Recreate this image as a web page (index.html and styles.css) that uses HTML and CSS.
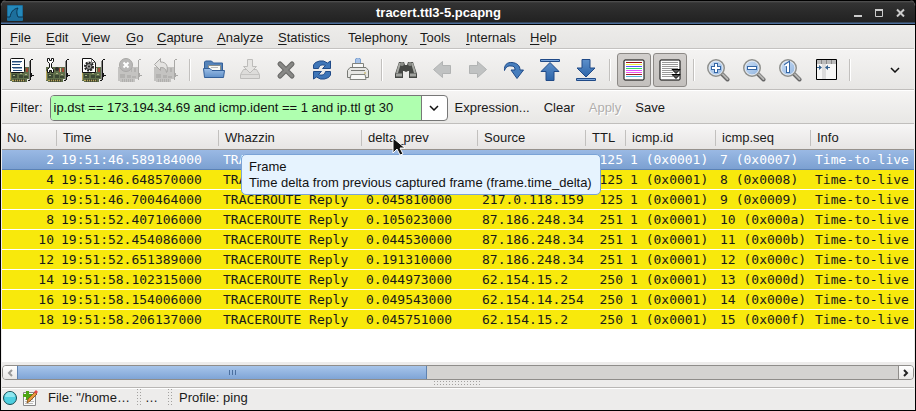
FILE: index.html
```html
<!DOCTYPE html>
<html lang="en">
<head>
<meta charset="utf-8">
<title>tracert.ttl3-5.pcapng</title>
<link rel="stylesheet" href="styles.css">
</head>
<body>
<svg class="defs" aria-hidden="true">
  <defs>
    <linearGradient id="blue" x1="0" y1="0" x2="0" y2="1"><stop offset="0" stop-color="#5d90cb"/><stop offset="1" stop-color="#2c64a8"/></linearGradient>
    <linearGradient id="folder" x1="0" y1="0" x2="0" y2="1"><stop offset="0" stop-color="#9dbfe6"/><stop offset="1" stop-color="#5f8fc8"/></linearGradient>
    <linearGradient id="lens" x1="0" y1="0" x2="1" y2="1"><stop offset="0" stop-color="#cfe0f4"/><stop offset="1" stop-color="#8fb4e0"/></linearGradient>
    <symbol id="card" viewBox="0 0 24 24">
      <g shape-rendering="crispEdges">
        <path d="M0 9h20v12h-3v3H2v-1H0z" fill="#5f6e4a"/>
        <path d="M0 13h1v9H0zM2 22h13v1H2z" fill="#b9a65a"/>
        <path d="M4 21h1v3H4zM6 21h1v3H6zM8 21h1v3H8zM10 21h1v3h-1zM12 21h1v3h-1zM14 21h1v3h-1z" fill="#4a4830"/>
        <path d="M2 16h5v4H2zM9 17h4v3H9zM14 18h4v2h-4z" fill="#3b4733"/>
        <path d="M3 17h2v1H3zM10 15h2v1h-2zM15 16h2v1h-2z" fill="#a6b184"/>
        <path d="M13 10h1v4h-1zM16 10h2v4h-2z" fill="#a04a35"/>
        <path d="M14 10h1v4h-1z" fill="#d7c9a4"/>
        <path d="M19 3h1v19h-1z" fill="#8a8a86"/>
        <path d="M20 2h1v20h-1zM21 1h2v1h-2zM21 15h1v4h-1zM22 17h2v1h-2zM18 22h2v1h-2z" fill="#161616"/>
      </g>
    </symbol>
    <symbol id="graycard" viewBox="0 0 24 24">
      <g shape-rendering="crispEdges">
        <path d="M0 9h20v12h-3v3H2v-1H0z" fill="#c4c3c1"/>
        <path d="M4 21h1v3H4zM6 21h1v3H6zM8 21h1v3H8zM10 21h1v3h-1zM12 21h1v3h-1zM14 21h1v3h-1z" fill="#b0afad"/>
        <path d="M2 16h5v4H2zM9 17h4v3H9zM14 18h4v2h-4zM13 10h1v4h-1zM16 10h2v4h-2z" fill="#b3b2b0"/>
        <path d="M20 2h1v20h-1zM21 1h2v1h-2zM21 15h1v4h-1zM22 17h2v1h-2z" fill="#a9a8a6"/>
      </g>
    </symbol>
    <symbol id="glass" viewBox="0 0 24 24">
      <path d="M16 16l5.500 5.500" stroke="#666" stroke-width="4" stroke-linecap="round"/>
      <path d="M16.500 16l5 5" stroke="#b5b5b3" stroke-width="2" stroke-linecap="round"/>
      <circle cx="10" cy="10" r="8" fill="url(#lens)" stroke="#8f908d" stroke-width="2"/>
      <circle cx="10" cy="10" r="7" fill="none" stroke="#eef3fa"/>
    </symbol>
  </defs>
</svg>
<div class="window">
  <header class="titlebar">
    <svg class="app-icon" viewBox="0 0 16 16" aria-hidden="true"><rect width="16" height="16" rx="1" fill="#1b6c99"/><path d="M1 1h14v14H1z" fill="#2489bb"/><path d="M0 12h3c1-5 3-8 8-9-2 3-1 7 0 9h5v3H0z" fill="#1d6f9c"/><path d="M0 12h3c1-5 3-8 8-9-2 3-1 7 0 9h5" fill="none" stroke="#0b3552" stroke-width="1"/></svg>
    <h1>tracert.ttl3-5.pcapng</h1>
    <div class="window-buttons">
      <button aria-label="Minimize"><svg viewBox="0 0 9 9"><path d="M0 8h8" stroke="#ccc" stroke-width="2"/></svg></button>
      <button aria-label="Maximize"><svg viewBox="0 0 9 9"><path d="M.5 1v7.500h7V1" fill="none" stroke="#ccc"/><path d="M0 2h8" stroke="#ccc" stroke-width="2"/></svg></button>
      <button aria-label="Close"><svg viewBox="0 0 9 9"><path d="M1 1.500l7 7M8 1.500l-7 7" stroke="#ccc" stroke-width="2"/></svg></button>
    </div>
  </header>
  <nav class="menubar">
    <button><u>F</u>ile</button><button><u>E</u>dit</button><button><u>V</u>iew</button><button><u>G</u>o</button><button><u>C</u>apture</button><button><u>A</u>nalyze</button><button><u>S</u>tatistics</button><button>Telephon<u>y</u></button><button><u>T</u>ools</button><button><u>I</u>nternals</button><button><u>H</u>elp</button>
  </nav>
  <div class="toolbar">
    <button class="tool" aria-label="List interfaces"><svg viewBox="0 0 24 24"><use href="#card"/><rect x=".5" y=".5" width="14" height="14" rx="1" fill="#fff" stroke="#111"/><path d="M2 3.500h10M2 6.500h8M2 9.500h10M3 12.500h9" stroke="#234a78"/><path d="M2 4.500h9M3 10.500h9" stroke="#8fa9c8"/></svg></button>
    <button class="tool" aria-label="Capture options"><svg viewBox="0 0 24 24"><use href="#card"/><path d="M1.500.500v3l2 2v4l-2 2v3h2v-2h2v2h2v-3l-2-2v-4l2-2v-3h-2v2h-2v-2z" fill="#fff" stroke="#111"/><circle cx="11" cy="11" r="2" fill="#333"/></svg></button>
    <button class="tool" aria-label="Start capture"><svg viewBox="0 0 24 24"><use href="#card"/><path d="M.5.500h9l4 4v10H.5z" fill="#fff" stroke="#111"/><path d="M9.500.500v4h4" fill="none" stroke="#777"/><circle cx="7" cy="8.500" r="4" fill="none" stroke="#222" stroke-width="2" stroke-dasharray="2 1"/><circle cx="7" cy="8.500" r="3" fill="#999" stroke="#222"/><circle cx="7" cy="8.500" r="1" fill="#222"/></svg></button>
    <button class="tool" aria-label="Stop capture" disabled><svg viewBox="0 0 24 24"><use href="#graycard"/><circle cx="8" cy="7" r="6.500" fill="#b9b8b7" stroke="#a8a7a5"/><path d="M5.500 4.500l5 5M10.500 4.500l-5 5" stroke="#fff" stroke-width="2"/></svg></button>
    <button class="tool" aria-label="Restart capture" disabled><svg viewBox="0 0 24 24"><use href="#graycard"/><path d="M.5 6.500l6-6v3.500c6 0 8 4 6 10.500-1-4-2-5-6-5v3z" fill="#e4e3e1" stroke="#a8a7a5"/></svg></button>
    <span class="separator"></span>
    <button class="tool" aria-label="Open"><svg viewBox="0 0 24 24"><path d="M2.500 12V4l1-1h6l2 2h9v8z" fill="#5583b8" stroke="#335f98"/><path d="M6.500 7.500h12v6h-12z" fill="#fafaf5" stroke="#8b8e88"/><path d="M9 9.500h7" stroke="#bbb"/><path d="M1.500 10.500H8l2 2h12.500l-1 7h-19z" fill="url(#folder)" stroke="#335f98"/></svg></button>
    <button class="tool" aria-label="Save" disabled><svg viewBox="0 0 24 24"><path d="M5.500 11.500h13l3 5v4h-19v-4z" fill="#dddcda" stroke="#bdbcba"/><path d="M3 16.500h18" stroke="#c4c3c1"/><path d="M9.500 1.500h5v7h4L12 15 5.500 8.500h4z" fill="#e5e4e2" stroke="#bdbcba"/></svg></button>
    <button class="tool" aria-label="Close file"><svg viewBox="0 0 24 24"><path d="M6 6l12 12M18 6L6 18" stroke="#676765" stroke-width="5" stroke-linecap="round"/><path d="M6 6l12 12M18 6L6 18" stroke="#888886" stroke-width="3" stroke-linecap="round"/></svg></button>
    <button class="tool" aria-label="Reload"><svg viewBox="0 0 24 24"><g fill="#3f76b8" stroke="#204a87" stroke-linejoin="round"><path d="M3.500 10.500V7l2-2.500 4-1.500h4l4 2 3-2v7.500h-8l3-3c-3-1-6-1-7 3z"/><path d="M20.500 13.500V17l-2 2.500-4 1.500h-4l-4-2-3 2v-7.500h8l-3 3c3 1 6 1 7-3z"/></g></svg></button>
    <button class="tool" aria-label="Print"><svg viewBox="0 0 24 24"><path d="M9.500 6V1l2-1h1l2 1v5z" fill="#a7c2e7" stroke="#7ba0d0"/><path d="M6.500 5.500h11v6h-11z" fill="#f8f8f6" stroke="#80827d"/><path d="M4 9.500h16l2.500 3v7h-21v-7z" fill="#e6e6e3" stroke="#777974"/><path d="M5 12.500h14" stroke="#777974"/><path d="M5 16.500h14l1 5H4z" fill="#f7f7f5" stroke="#80827d"/><path d="M18 15h2" stroke="#b9a646"/></svg></button>
    <span class="separator"></span>
    <button class="tool" aria-label="Find packet"><svg viewBox="0 0 24 24"><path d="M5 4h5l1 3h2l1-3h5l4 12v4h-8v-7h-1l-2 1-2-1H9v7H1v-4z" fill="#464845"/><path d="M6 5L3 15M18 5l3 10" stroke="#a7a9a4" stroke-width="2"/><path d="M2 17h6M16 17h6" stroke="#a1a39f" stroke-width="3"/><circle cx="8" cy="6" r="2" fill="#8b8d88"/><circle cx="16" cy="6" r="2" fill="#8b8d88"/></svg></button>
    <button class="tool" aria-label="Back" disabled><svg viewBox="0 0 24 24"><path d="M3.500 11.500l9-8v4h8v8h-8v4z" fill="#c0c2c2" stroke="#b1b3b3"/></svg></button>
    <button class="tool" aria-label="Forward" disabled><svg viewBox="0 0 24 24"><path d="M20.500 11.500l-9-8v4h-8v8h8v4z" fill="#c0c2c2" stroke="#b1b3b3"/></svg></button>
    <button class="tool" aria-label="Go to packet"><svg viewBox="0 0 24 24"><path d="M2.500 12.500C2 7 5 4 10 4.500c5 .500 8 3 8 7.500h3.500L15 20.500 9 12h4c0-3-1-4-4-4-3-.500-5 1-6.500 4.500z" fill="#477ebd" stroke="#204a87"/></svg></button>
    <button class="tool" aria-label="First packet"><svg viewBox="0 0 24 24"><path d="M2.500 1.500h19v2h-19z" fill="#7ba6db" stroke="#204a87"/><path d="M12 4.500l9 9h-5v9H8v-9H3z" fill="url(#blue)" stroke="#204a87"/></svg></button>
    <button class="tool" aria-label="Last packet"><svg viewBox="0 0 24 24"><path d="M2.500 20.500h19v2h-19z" fill="#7ba6db" stroke="#204a87"/><path d="M12 19l9-9h-5V1.500H8V10H3z" fill="url(#blue)" stroke="#204a87"/></svg></button>
    <span class="separator"></span>
    <button class="tool pressed" aria-label="Colorize" aria-pressed="true"><svg viewBox="0 0 24 24"><rect x="2" y="2" width="20" height="20" rx="1" fill="#fff" stroke="#000"/><g stroke-width="1"><path d="M4 4.500h16" stroke="#911"/><path d="M4 6.500h16" stroke="#ee4"/><path d="M4 8.500h16" stroke="#55f"/><path d="M4 10.500h16" stroke="#3d6"/><path d="M4 12.500h16" stroke="#d5f"/><path d="M4 14.500h16" stroke="#e5e"/><path d="M4 16.500h16" stroke="#922"/><path d="M4 18.500h16" stroke="#5bd"/></g></svg></button>
    <button class="tool pressed" aria-label="Auto scroll" aria-pressed="true"><svg viewBox="0 0 24 24"><rect x="2" y="2" width="20" height="20" rx="1" fill="#fff" stroke="#000"/><path d="M4 4.500h16M4 6.500h16M4 8.500h16M4 10.500h16M4 12.500h10M4 14.500h11M4 16.500h10M4 18.500h11" stroke="#999"/><path d="M14 11.500h8l-4 4zM14 16.500h8l-4 4z" fill="#555" stroke="#000"/></svg></button>
    <span class="separator"></span>
    <button class="tool" aria-label="Zoom in"><svg viewBox="0 0 24 24"><use href="#glass"/><path d="M10 5v10M5 10h10" stroke="#3566a4" stroke-width="4"/><path d="M10 6v8M6 10h8" stroke="#fff" stroke-width="2"/></svg></button>
    <button class="tool" aria-label="Zoom out"><svg viewBox="0 0 24 24"><use href="#glass"/><path d="M5 10h10" stroke="#3566a4" stroke-width="4"/><path d="M6 10h8" stroke="#fff" stroke-width="2"/></svg></button>
    <button class="tool" aria-label="Normal size"><svg viewBox="0 0 24 24"><use href="#glass"/><path d="M7 8l3-2v9" fill="none" stroke="#3566a4" stroke-width="4"/><path d="M7 8l3-2v8" fill="none" stroke="#fff" stroke-width="2"/></svg></button>
    <button class="tool" aria-label="Resize columns"><svg viewBox="0 0 24 24"><path d="M2.500 1.500h20v20h-20z" fill="#f7f7f6" stroke="#000"/><path d="M3 2h19v4H3z" fill="#bbb"/><path d="M8 6h4v15H8z" fill="#ddd"/><path d="M7.500 2v4M12.500 2v4M17.500 2v4" stroke="#888"/><path d="M3 9.500h4M12 9.500h4" stroke="#35618e"/><path d="M5 7l3 2.500L5 12zM14 7l-3 2.500 3 2.500z" fill="#35618e"/></svg></button>
    <span class="separator"></span>
    <button class="overflow" aria-label="More tools"><svg viewBox="0 0 10 6"><path d="M1 1l4 4 4-4" fill="none" stroke="#111" stroke-width="1.500"/></svg></button>
  </div>
  <form class="filterbar">
    <label for="filter">Filter:</label>
    <div class="combo">
      <input id="filter" type="text" value="ip.dst == 173.194.34.69 and icmp.ident == 1 and ip.ttl gt 30">
      <button type="button" aria-label="Recent filters"><svg viewBox="0 0 10 6"><path d="M1 1l4 4 4-4" fill="none" stroke="#111" stroke-width="1.500"/></svg></button>
    </div>
    <button type="button">Expression...</button>
    <button type="button">Clear</button>
    <button type="button" disabled>Apply</button>
    <button type="button">Save</button>
  </form>
  <main class="packets">
    <table>
      <colgroup><col class="c-no"><col class="c-time"><col class="c-what"><col class="c-delta"><col class="c-source"><col class="c-ttl"><col class="c-id"><col class="c-seq"><col></colgroup>
      <thead><tr><th>No.</th><th>Time</th><th>Whazzin</th><th>delta_prev</th><th>Source</th><th>TTL</th><th>icmp.id</th><th>icmp.seq</th><th>Info</th></tr></thead>
      <tbody>
        <tr class="selected"><td>2</td><td>19:51:46.589184000</td><td>TRACEROUTE Reply</td><td></td><td></td><td>125</td><td>1 (0x0001)</td><td>7 (0x0007)</td><td>Time-to-live</td></tr>
        <tr><td>4</td><td>19:51:46.648570000</td><td>TRACEROUTE Reply</td><td></td><td></td><td>125</td><td>1 (0x0001)</td><td>8 (0x0008)</td><td>Time-to-live</td></tr>
        <tr><td>6</td><td>19:51:46.700464000</td><td>TRACEROUTE Reply</td><td>0.045810000</td><td>217.0.118.159</td><td>125</td><td>1 (0x0001)</td><td>9 (0x0009)</td><td>Time-to-live</td></tr>
        <tr><td>8</td><td>19:51:52.407106000</td><td>TRACEROUTE Reply</td><td>0.105023000</td><td>87.186.248.34</td><td>251</td><td>1 (0x0001)</td><td>10 (0x000a)</td><td>Time-to-live</td></tr>
        <tr><td>10</td><td>19:51:52.454086000</td><td>TRACEROUTE Reply</td><td>0.044530000</td><td>87.186.248.34</td><td>251</td><td>1 (0x0001)</td><td>11 (0x000b)</td><td>Time-to-live</td></tr>
        <tr><td>12</td><td>19:51:52.651389000</td><td>TRACEROUTE Reply</td><td>0.191310000</td><td>87.186.248.34</td><td>251</td><td>1 (0x0001)</td><td>12 (0x000c)</td><td>Time-to-live</td></tr>
        <tr><td>14</td><td>19:51:58.102315000</td><td>TRACEROUTE Reply</td><td>0.044973000</td><td>62.154.15.2</td><td>250</td><td>1 (0x0001)</td><td>13 (0x000d)</td><td>Time-to-live</td></tr>
        <tr><td>16</td><td>19:51:58.154006000</td><td>TRACEROUTE Reply</td><td>0.049543000</td><td>62.154.14.254</td><td>250</td><td>1 (0x0001)</td><td>14 (0x000e)</td><td>Time-to-live</td></tr>
        <tr><td>18</td><td>19:51:58.206137000</td><td>TRACEROUTE Reply</td><td>0.045751000</td><td>62.154.15.2</td><td>250</td><td>1 (0x0001)</td><td>15 (0x000f)</td><td>Time-to-live</td></tr>
      </tbody>
    </table>
    <div class="tooltip" role="tooltip">Frame<br>Time delta from previous captured frame (frame.time_delta)</div>
    <svg class="cursor" viewBox="0 0 13 20" aria-hidden="true"><path d="M1 1v15l4-4 3 6 3-1-3-6h5z" fill="#111" stroke="#fff"/></svg>
  </main>
  <div class="scrollbar">
    <button aria-label="Scroll left" disabled><svg viewBox="0 0 6 8"><path d="M5 1L2 4l3 3" fill="none" stroke="#999" stroke-width="2"/></svg></button>
    <div class="track"><div class="thumb"><i></i><i></i><i></i></div></div>
    <button aria-label="Scroll right"><svg viewBox="0 0 6 8"><path d="M1 1l3 3-3 3" fill="none" stroke="#222" stroke-width="2"/></svg></button>
  </div>
  <div class="pane-grip"><span></span></div>
  <footer class="statusbar">
    <button aria-label="Expert info"><svg viewBox="0 0 16 16"><circle cx="8" cy="8" r="6.500" fill="#4dcfe0" stroke="#174b52"/><path d="M3 7a5 5 0 0 1 10 0z" fill="#8ee6ee"/></svg></button>
    <button aria-label="Edit capture comment"><svg viewBox="0 0 16 16"><path d="M1.500 2.500h12v13h-12z" fill="#fafafa" stroke="#888"/><path d="M3 9.500h8M3 11.500h9M3 13.500h8" stroke="#bbb"/><path d="M4 1h3v3h3v3H7v3H4V7H1V4h3z" fill="#4ea514"/><path d="M5 13l1-4 7-7 2 2-7 7z" fill="#e99a3e" stroke="#8c5a22"/><path d="M12 2l2-2 2 2-2 2z" fill="#e04848"/></svg></button>
    <span class="file">File: "/home…</span>
    <span class="grip"></span>
    <span class="packets-info">…</span>
    <span class="grip"></span>
    <span class="profile">Profile: ping</span>
  </footer>
</div>
</body>
</html>
```
FILE: styles.css
```css
* { box-sizing: border-box; }

body {
  margin: 0;
  background: #000;
  color: #1a1a1a;
  font: 13px/16px "Liberation Sans", Arial, sans-serif;
}

button {
  padding: 0;
  border: 0;
  background: none;
  color: inherit;
  font: inherit;
}

svg { display: block; }
.defs { position: absolute; width: 0; height: 0; }

.window {
  display: flex;
  flex-direction: column;
  min-height: 100vh;
  padding: 0 1px;
  overflow: hidden;
  background: #edeceb;
  border: solid #000;
  border-width: 0 1px 1px;
  border-radius: 6px 6px 0 0;
}

.titlebar {
  display: flex;
  align-items: center;
  height: 25px;
  margin: 0 -1px;
  padding: 0 10px 0 6px;
  border-top: 1px solid #000;
  border-bottom: 1px solid #000;
  background: linear-gradient(#555 0, #333 2px, #2b2b2b 10px, #222 21px, #4d6f9c 22px);
}
.app-icon { width: 16px; height: 16px; }
.titlebar h1 {
  flex: 1;
  margin: 0;
  color: #fff;
  font-size: 13px;
  font-weight: bold;
  text-align: center;
}
.window-buttons { display: flex; gap: 12px; }
.window-buttons svg { width: 9px; height: 9px; }

.menubar {
  display: grid;
  grid-template-columns: 36px 36px 44px 31px 60px 61px 70px 72px 46px 64px auto;
  justify-content: start;
  justify-items: start;
  height: 24px;
  padding: 2px 0 0 8px;
  border-bottom: 1px solid #c4c2c0;
  background: linear-gradient(#edecea, #e6e5e3);
}
.menubar u { text-underline-offset: 2px; }

.toolbar {
  display: flex;
  align-items: center;
  height: 41px;
  padding: 0 9px 0 2px;
  border-top: 1px solid #fff;
  border-bottom: 1px solid #c0bebc;
  background: linear-gradient(#f4f3f2, #e7e6e4);
}
.tool {
  display: grid;
  place-items: center;
  width: 34px;
  height: 34px;
  margin: 0 1px;
  border: 1px solid transparent;
  border-radius: 3px;
}
.tool svg { width: 24px; height: 24px; }
.tool.pressed {
  border-color: #8c8986;
  background: linear-gradient(#d2cfcd, #c3c0bd);
}
.separator {
  width: 2px;
  height: 22px;
  margin: 0 5px;
  border-left: 1px solid #c2c0be;
  border-right: 1px solid #fff;
}
.overflow { margin-left: auto; padding: 5px; }
.overflow svg, .combo svg { width: 10px; height: 6px; }

.filterbar {
  display: flex;
  align-items: center;
  height: 34px;
  padding: 2px 0 0 8px;
  border-top: 1px solid #fff;
  border-bottom: 1px solid #c0bebc;
  background: linear-gradient(#f5f4f3, #e8e7e5);
}
.filterbar > button { margin-right: 14px; }
.filterbar > button:disabled { color: #b0aeac; text-shadow: 1px 1px #fff; }
.combo {
  display: flex;
  width: 398px;
  height: 26px;
  margin: 0 7px;
  border: 1px solid #777;
  border-radius: 4px;
  background: #fff;
  overflow: hidden;
}
.combo input {
  flex: 1;
  min-width: 0;
  padding: 0 3px;
  border: 0;
  border-right: 1px solid #777;
  background: #afffaf;
  color: #111;
  font: inherit;
  outline: 0;
}
.combo button { display: grid; place-items: center; width: 25px; }

.packets {
  position: relative;
  flex: 1;
  overflow: hidden;
  background: #fff;
}
table {
  width: 100%;
  table-layout: fixed;
  border-collapse: separate;
  border-spacing: 0;
}
.c-no { width: 55px; }
.c-time { width: 162px; }
.c-what { width: 143px; }
.c-delta { width: 116px; }
.c-source { width: 108px; }
.c-ttl { width: 40px; }
.c-id { width: 90px; }
.c-seq { width: 95px; }
thead tr {
  background: linear-gradient(#f7f6f6, #e6e4e3);
}
th {
  height: 26px;
  padding: 3px 0 0 6px;
  border-bottom: 1px solid #96918c;
  background: linear-gradient(#c2c0be, #c2c0be) right 6px / 1px 16px no-repeat;
  font-weight: normal;
  text-align: left;
  white-space: nowrap;
}
th:first-child { padding-left: 5px; }
th:last-child { background: none; }
td {
  height: 20px;
  padding: 0 0 0 4px;
  border-bottom: 1px solid #fff;
  font: 13px/19px "DejaVu Sans Mono", monospace;
  white-space: nowrap;
}
td:nth-child(1), td:nth-child(6) { padding: 0 3px 0 0; text-align: right; }
tbody tr { background: #f8e90c; }
.selected {
  background: linear-gradient(#9ab9e4, #7a9fd0);
  color: #fff;
}
.selected td { border-bottom-color: #5b82b5; }

.tooltip {
  position: absolute;
  top: 30px;
  left: 239px;
  padding: 4px 8px 3px 7px;
  border: 1px solid #7ba3d6;
  border-radius: 5px;
  background: #e6f3fe;
  color: #111;
  white-space: nowrap;
}
.cursor {
  position: absolute;
  top: 13px;
  left: 390px;
  width: 13px;
  height: 20px;
}

.scrollbar {
  display: flex;
  height: 15px;
  margin: 3px 0 0;
  border: 1px solid #8f8d8a;
  border-radius: 4px;
  overflow: hidden;
}
.scrollbar button {
  display: grid;
  place-items: center;
  width: 14px;
  background: linear-gradient(#fff, #e8e7e5);
}
.scrollbar svg { width: 6px; height: 8px; }
.track { flex: 1; background: #d4d3d1; border-right: 1px solid #8f8d8a; }
.thumb {
  display: flex;
  align-items: center;
  justify-content: center;
  gap: 2px;
  width: calc(47% - 4px);
  height: 100%;
  padding-left: 20px;
  border: solid #5e82b0;
  border-width: 0 1px;
  background: linear-gradient(#a7c5ea, #7fa4d6);
}
.thumb i { width: 1px; height: 5px; background: #4b6f9f; }

.pane-grip {
  display: grid;
  place-items: center;
  height: 7px;
}
.pane-grip span, .grip {
  background:
    linear-gradient(90deg, transparent 1px, #edeceb 1px) 0 0 / 3px 3px,
    linear-gradient(#a3a19f 1px, transparent 1px) 0 0 / 3px 3px;
}
.pane-grip span { width: 48px; height: 5px; }

.statusbar {
  display: flex;
  align-items: center;
  height: 23px;
  padding-bottom: 2px;
  border-top: 1px solid #b9b7b5;
  box-shadow: inset 0 1px #fff;
}
.statusbar svg { width: 16px; height: 16px; }
.statusbar button { margin-right: 4px; }
.file { width: 95px; padding-left: 6px; }
.packets-info { width: 26px; padding-left: 3px; }
.profile { padding-left: 6px; }
.grip { width: 5px; height: 18px; }
```
